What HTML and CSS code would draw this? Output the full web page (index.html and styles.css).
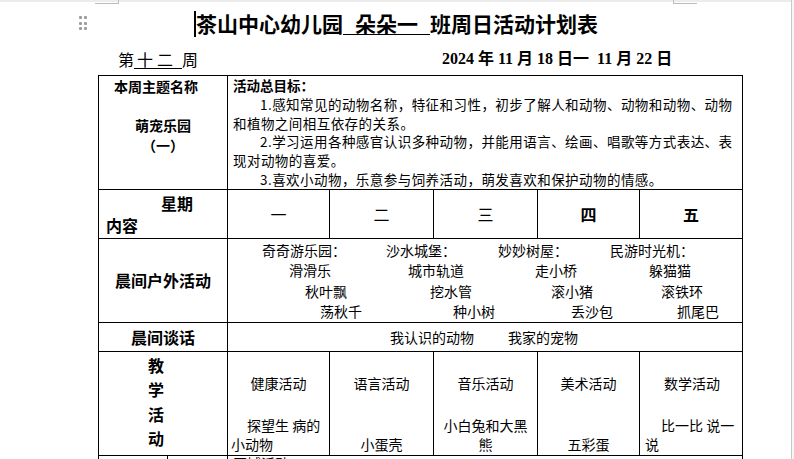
FILE: index.html
```html
<!DOCTYPE html>
<html lang="zh-CN">
<head>
<meta charset="utf-8">
<title>茶山中心幼儿园 周日活动计划表</title>
<link rel="stylesheet" href="styles.css">
</head>
<body>
<div class="doc">
  <div class="topstrip">
    <span class="mark mark-l"></span>
    <span class="mark mark-r"></span>
  </div>
  <div class="title-row">
    <div class="handle">
      <i></i><i></i><i></i><i></i><i></i><i></i>
    </div>
    <h1 class="title"><span class="caret"></span>茶山中心幼儿园<span class="ul-title">朵朵一</span>班周日活动计划表</h1>
  </div>
  <div class="meta">
    <span class="week">第<span class="ul-week">十二</span>周</span>
    <span class="date">2024 年 11 月 18 日一  11 月 22 日</span>
  </div>
  <table class="plan">
    <colgroup>
      <col class="c-a"><col class="c-b"><col class="c-d1"><col class="c-d2"><col class="c-d3"><col class="c-d4"><col class="c-d5">
    </colgroup>
    <tr class="r1">
      <td colspan="2" class="theme">
        <div class="theme-name">本周主题名称</div>
        <div>&nbsp;</div>
        <div>萌宠乐园</div>
        <div>（一）</div>
      </td>
      <td colspan="5" class="goal">
        <div class="goal-head">活动总目标：</div>
        <div class="ind">1.感知常见的动物名称，特征和习性，初步了解人和动物、动物和动物、动物</div>
        <div>和植物之间相互依存的关系。</div>
        <div class="ind">2.学习运用各种感官认识多种动物，并能用语言、绘画、唱歌等方式表达、表</div>
        <div>现对动物的喜爱。</div>
        <div class="ind">3.喜欢小动物，乐意参与饲养活动，萌发喜欢和保护动物的情感。</div>
      </td>
    </tr>
    <tr class="r2">
      <td colspan="2" class="weekhead">
        <div class="wk">星期</div>
        <div class="nr">内容</div>
      </td>
      <td class="day">一</td>
      <td class="day">二</td>
      <td class="day">三</td>
      <td class="day bold">四</td>
      <td class="day bold">五</td>
    </tr>
    <tr class="r3">
      <td colspan="2" class="section">晨间户外活动</td>
      <td colspan="5" class="outdoor">
        <div class="ol ol1"><span>奇奇游乐园：</span><span>沙水城堡：</span><span>妙妙树屋：</span><span>民游时光机：</span></div>
        <div class="ol ol2"><span>滑滑乐</span><span>城市轨道</span><span>走小桥</span><span>躲猫猫</span></div>
        <div class="ol ol3"><span>秋叶飘</span><span>挖水管</span><span>滚小猪</span><span>滚铁环</span></div>
        <div class="ol ol4"><span>荡秋千</span><span>种小树</span><span>丢沙包</span><span>抓尾巴</span></div>
      </td>
    </tr>
    <tr class="r4">
      <td colspan="2" class="section">晨间谈话</td>
      <td colspan="5" class="talk">我认识的动物<span class="talk-2">我家的宠物</span></td>
    </tr>
    <tr class="r5">
      <td colspan="2" class="teach">教<br>学<br>活<br>动</td>
      <td class="act">
        <div class="act-title">健康活动</div>
        <div class="act-body">
          <div class="indent">探望生 病的</div>
          <div>小动物</div>
        </div>
      </td>
      <td class="act">
        <div class="act-title">语言活动</div>
        <div class="act-body center">
          <div>&nbsp;</div>
          <div>小蛋壳</div>
        </div>
      </td>
      <td class="act">
        <div class="act-title">音乐活动</div>
        <div class="act-body center">
          <div>小白兔和大黑</div>
          <div>熊</div>
        </div>
      </td>
      <td class="act">
        <div class="act-title">美术活动</div>
        <div class="act-body center">
          <div>&nbsp;</div>
          <div>五彩蛋</div>
        </div>
      </td>
      <td class="act act-last">
        <div class="act-title">数学活动</div>
        <div class="act-body">
          <div class="indent">比一比 说一</div>
          <div>说</div>
        </div>
      </td>
    </tr>
    <tr class="r6">
      <td class="blank"></td>
      <td class="blank"></td>
      <td colspan="5" class="area">区域活动</td>
    </tr>
  </table>
</div>
<div class="edge"></div>
</body>
</html>
```

FILE: styles.css
```css
html, body {
  margin: 0;
  padding: 0;
  height: 100%;
  overflow: hidden;
  background: #fff;
}

body {
  display: flex;
  font-family: "Noto Sans CJK SC", "Noto Sans", sans-serif;
  color: #000;
}

.doc {
  flex: 1;
  min-width: 0;
}

.edge {
  width: 2px;
  border-left: 1px solid #c8c8c8;
  background: #f6f6f6;
}

/* page top strip with crop marks */
.topstrip {
  height: 4px;
  display: flex;
  background: linear-gradient(#ececec 0 2px, #fff 2px);
}

.mark {
  display: block;
  width: 23px;
  height: 3px;
  border-bottom: 1px solid #bdbdbd;
}

.mark-l {
  margin-left: 95px;
  border-right: 1px solid #bdbdbd;
}

.mark-r {
  margin-left: 554px;
  border-left: 1px solid #bdbdbd;
}

/* title */
.title-row {
  display: flex;
  align-items: flex-start;
  height: 33px;
  padding-top: 5px;
  box-sizing: border-box;
}

.handle {
  margin-left: 79px;
  margin-top: 7px;
  display: grid;
  grid-template-columns: 3px 3px;
  column-gap: 2px;
  row-gap: 2.7px;
}

.handle i {
  display: block;
  width: 3px;
  height: 3px;
  border-radius: 1px;
  background: #9c9c9c;
}

.title {
  margin: 0 0 0 107px;
  font-size: 21px;
  line-height: 28px;
  font-weight: 700;
  white-space: nowrap;
}

.caret {
  display: inline-block;
  width: 2px;
  height: 26px;
  background: #000;
  vertical-align: -5px;
}

.ul-title {
  display: inline-block;
  line-height: 1;
  padding: 0 12px 0 12px;
  border-bottom: 1px solid #000;
}

/* meta line */
.meta {
  display: flex;
  height: 22px;
  margin-top: 11px;
  padding-left: 118px;
  font-size: 16px;
  line-height: 22px;
  white-space: nowrap;
}

.week {
  width: 324px;
}

.ul-week {
  display: inline-block;
  line-height: 1;
  padding: 0 5px 1px 3px;
  letter-spacing: 4px;
  border-bottom: 1px solid #000;
}

.date {
  font-family: "Liberation Serif", "Noto Sans CJK SC", serif;
  font-weight: 700;
  white-space: pre;
}

/* table */
.plan {
  margin: 5px 0 0 98px;
  border-collapse: collapse;
  table-layout: fixed;
  width: 645px;
}

.c-a { width: 69px; }
.c-b { width: 60px; }
.c-d1 { width: 102px; }
.c-d2 { width: 104px; }
.c-d3 { width: 104px; }
.c-d4 { width: 102px; }
.c-d5 { width: 103px; }

.plan td {
  border: 1px solid #000;
  padding: 0;
  vertical-align: top;
  font-size: 14px;
  white-space: nowrap;
}

.r1 { height: 114px; }
.r2 { height: 49px; }
.r3 { height: 83px; }
.r4 { height: 29px; }
.r5 { height: 104px; }
.r6 { height: 30px; }

.theme {
  text-align: center;
  font-weight: 700;
  line-height: 19.5px;
  padding-top: 1px !important;
}

.theme-name {
  padding-right: 14px;
}

.goal {
  padding-left: 5px !important;
  font-size: 13.5px !important;
  letter-spacing: 0.45px;
  line-height: 18.8px;
}

.goal-head {
  font-weight: 700;
  letter-spacing: 0;
}

.ind {
  padding-left: 27px;
}

.weekhead {
  font-weight: 700;
  font-size: 16px !important;
  line-height: 22px;
  padding-top: 2px !important;
}

.wk { padding-left: 62px; }
.nr { padding-left: 7px; }

.plan .day {
  vertical-align: middle;
  text-align: center;
  font-size: 16px;
}

.day.bold {
  font-weight: 700;
}

.plan .section {
  vertical-align: middle;
  text-align: center;
  font-weight: 700;
  font-size: 16px;
}

.ol {
  display: grid;
  height: 20.5px;
  line-height: 20.5px;
}

.outdoor {
  padding-top: 0.5px !important;
}

.ol1 { padding-left: 34px; grid-template-columns: 124px 112px 112px auto; }
.ol2 { padding-left: 61px; grid-template-columns: 119px 127px 114px auto; }
.ol3 { padding-left: 77px; grid-template-columns: 125px 121px 110px auto; }
.ol4 { padding-left: 92px; grid-template-columns: 133px 118px 106px auto; }

.plan .talk {
  vertical-align: middle;
  padding-left: 162px;
}

.talk-2 {
  margin-left: 34px;
}

.teach {
  text-align: center;
  font-weight: 700;
  font-size: 16px !important;
  line-height: 24.5px;
  padding-top: 1px !important;
  padding-right: 14px !important;
}

.plan .act {
  padding: 21px 3px 0 3px;
}

.plan .act-last {
  padding-left: 5px;
}

.act-title {
  text-align: center;
  line-height: 20px;
}

.act-body {
  margin-top: 23.5px;
  line-height: 19px;
}

.act-body.center {
  text-align: center;
}

.indent {
  padding-left: 16px;
}

.plan .area {
  padding-left: 5px;
  line-height: 14px;
}
```
